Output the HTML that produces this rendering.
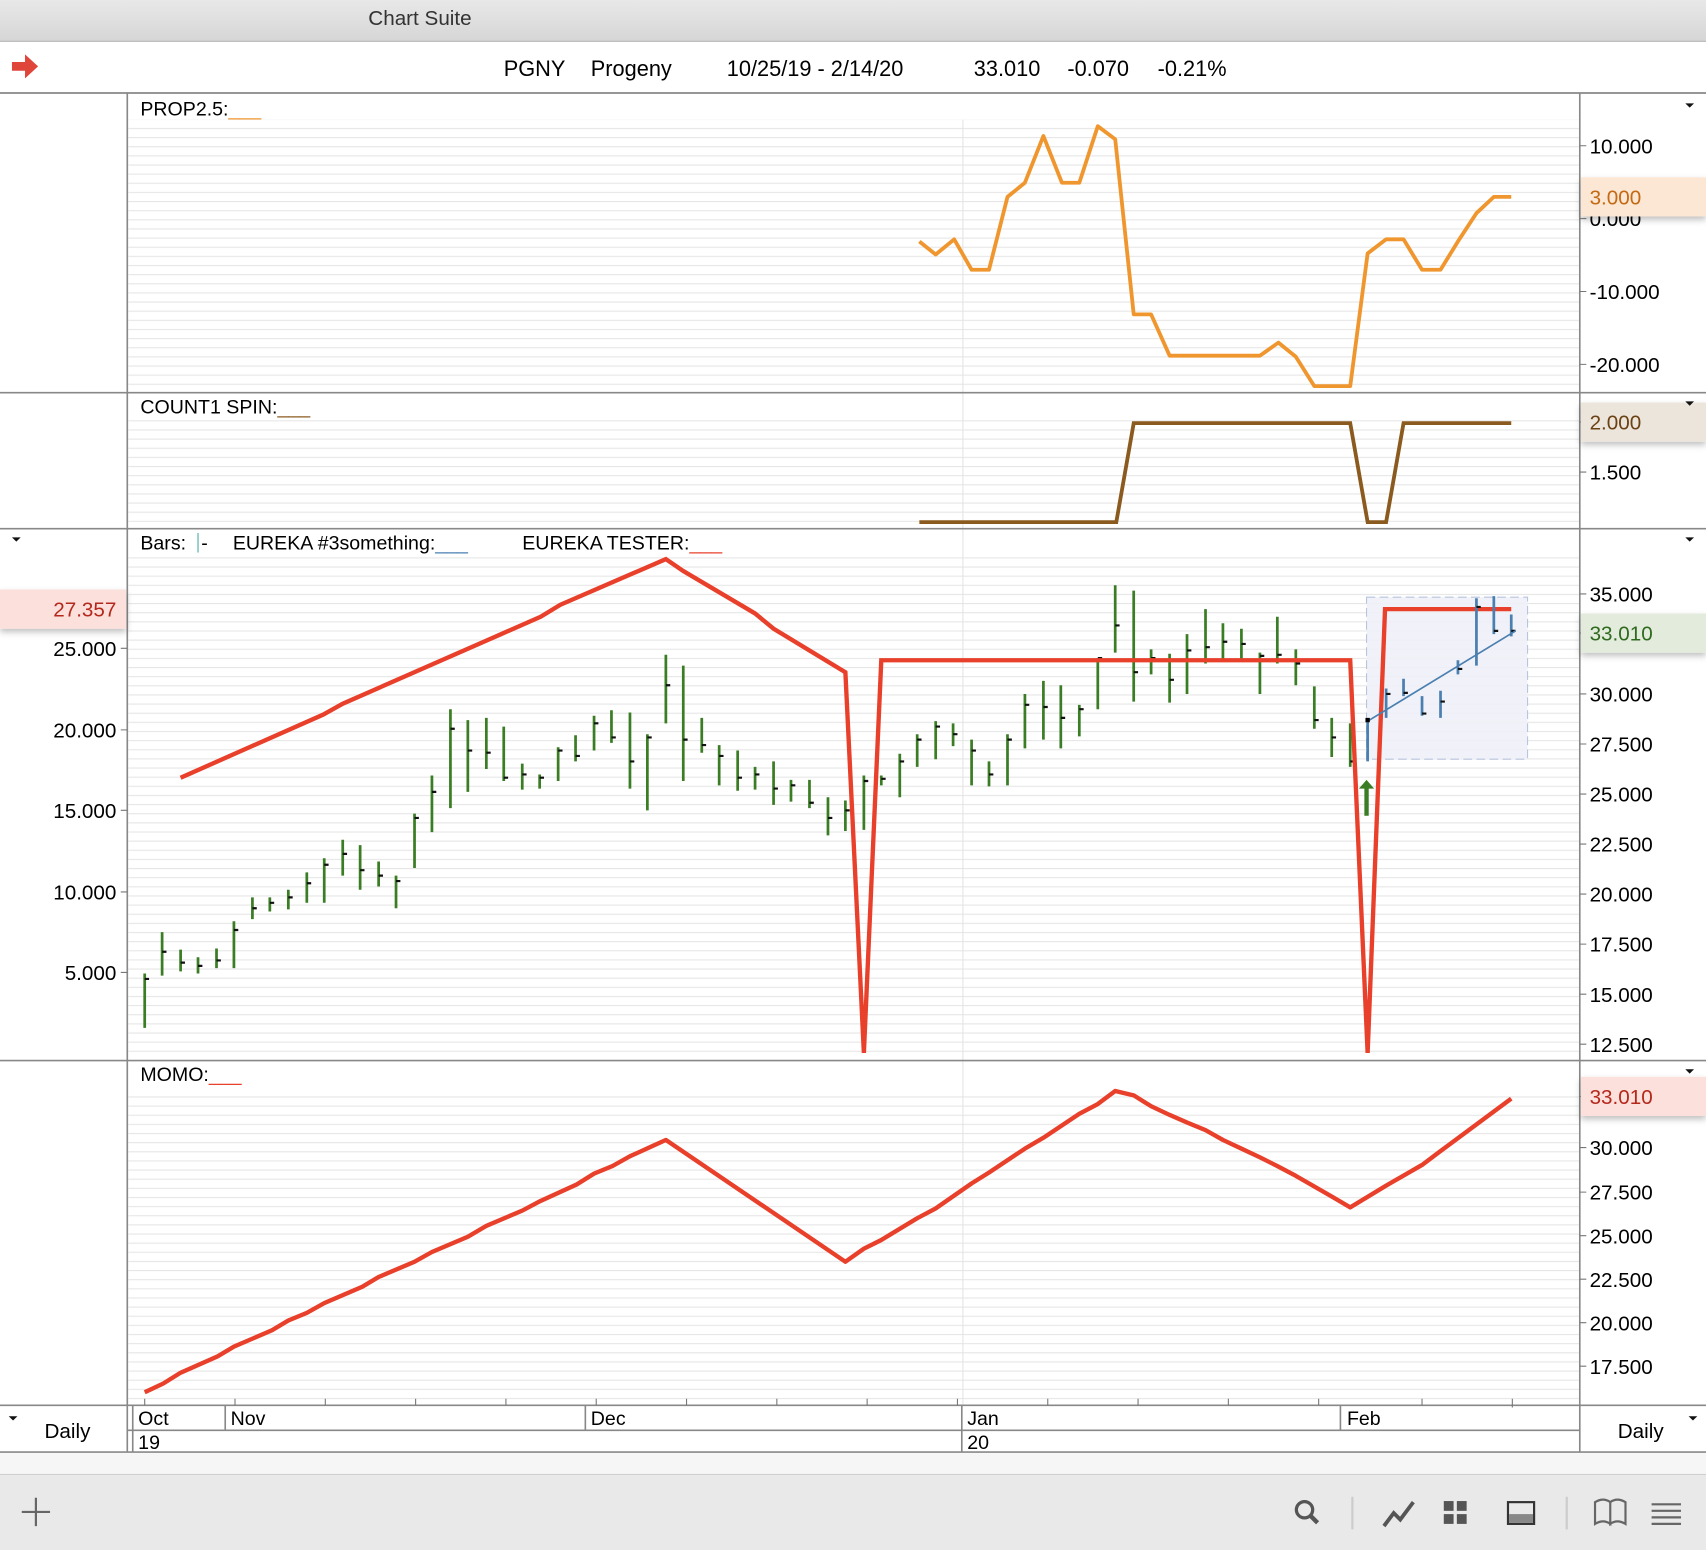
<!DOCTYPE html>
<html><head><meta charset="utf-8"><style>
html,body{margin:0;padding:0;background:#fff;overflow:hidden}
svg{display:block}
text{font-family:"Liberation Sans",Arial,sans-serif}
</style></head><body>
<svg width="1706" height="1550" viewBox="0 0 1568 1425" preserveAspectRatio="none" xmlns="http://www.w3.org/2000/svg">
<defs>
<pattern id="g" width="10" height="8.4" patternUnits="userSpaceOnUse"><rect width="10" height="8.4" fill="#fff"/><line x1="0" y1="0.5" x2="10" y2="0.5" stroke="#e6e6e6" stroke-width="1"/></pattern>
<linearGradient id="tb" x1="0" y1="0" x2="0" y2="1"><stop offset="0" stop-color="#e8e8e8"/><stop offset="1" stop-color="#d6d6d6"/></linearGradient>
<filter id="sh" x="-20%" y="-40%" width="140%" height="200%"><feDropShadow dx="0" dy="3" stdDeviation="3" flood-color="#000" flood-opacity="0.25"/></filter>
</defs>
<rect width="1568" height="1425" fill="#fff"/>
<rect x="0" y="0" width="1568" height="38" fill="url(#tb)"/>
<line x1="0" y1="38" x2="1568" y2="38" stroke="#b4b4b4"/>
<text x="386" y="23" font-size="19" text-anchor="middle" fill="#333">Chart Suite</text>
<path d="M11 57h12v-7l12 11-12 11v-7h-12z" fill="#e0453a"/>
<g font-size="20" fill="#000">
<text x="463" y="70">PGNY</text><text x="543" y="70">Progeny</text><text x="668" y="70">10/25/19 - 2/14/20</text>
<text x="895" y="70">33.010</text><text x="981" y="70">-0.070</text><text x="1064" y="70">-0.21%</text></g>
<line x1="0" y1="85.5" x2="1568" y2="85.5" stroke="#888" stroke-width="1.5"/>
<rect x="118" y="110" width="1334" height="250" fill="url(#g)"/>
<rect x="118" y="385" width="1334" height="100" fill="url(#g)"/>
<rect x="118" y="512" width="1334" height="462" fill="url(#g)"/>
<rect x="118" y="1003" width="1334" height="288" fill="url(#g)"/>
<line x1="885" y1="110" x2="885" y2="1292" stroke="#e4e4e4"/>
<g stroke="#888" stroke-width="1.5">
<line x1="0" y1="361" x2="1568" y2="361"/><line x1="0" y1="486" x2="1568" y2="486"/><line x1="0" y1="975" x2="1568" y2="975"/>
<line x1="0" y1="1292" x2="1568" y2="1292"/><line x1="117" y1="1315" x2="1452" y2="1315"/><line x1="0" y1="1335" x2="1568" y2="1335"/>
<line x1="117" y1="86" x2="117" y2="1335"/><line x1="1452" y1="86" x2="1452" y2="1335"/></g>
<g stroke="#777" stroke-width="1">
<path d="M1452 134h6M1452 201h6M1452 268h6M1452 335h6M1452 388h6M1452 434h6M1452 546h6M1452 582h6M1452 638h6M1452 684h6M1452 730h6M1452 776h6M1452 822h6M1452 868h6M1452 914h6M1452 960h6M1452 1008h6M1452 1055h6M1452 1096h6M1452 1136h6M1452 1176h6M1452 1216h6M1452 1256h6M111 596h6M111 671h6M111 745h6M111 820h6M111 894h6"/>
<path d="M133 1286v6M216 1286v6M299 1286v6M382 1286v6M465 1286v6M548 1286v6M631 1286v6M714 1286v6M797 1286v6M880 1286v6M963 1286v6M1046 1286v6M1129 1286v6M1212 1286v6M1307 1286v6M1390 1286v8"/>
</g>
<g font-size="18" fill="#000">
<text x="129" y="106">PROP2.5:<tspan fill="#f0962f">___</tspan></text>
<text x="129" y="380">COUNT1 SPIN:<tspan fill="#8b5a1f">___</tspan></text>
<text x="129" y="505">Bars:</text><line x1="182" y1="490" x2="182" y2="508" stroke="#4aa"/><text x="185" y="505">-</text>
<text x="214" y="505">EUREKA #3something:<tspan fill="#4a7fb0">___</tspan></text>
<text x="480" y="505">EUREKA TESTER:<tspan fill="#e8402b">___</tspan></text>
<text x="129" y="994">MOMO:<tspan fill="#e8402b">___</tspan></text>
</g>
<g font-size="19" fill="#000">
<text x="1461" y="141">10.000</text><text x="1461" y="208">0.000</text><text x="1461" y="275">-10.000</text><text x="1461" y="342">-20.000</text>
<text x="1461" y="441">1.500</text>
<text x="1461" y="553">35.000</text><text x="1461" y="645">30.000</text><text x="1461" y="691">27.500</text><text x="1461" y="737">25.000</text><text x="1461" y="783">22.500</text><text x="1461" y="829">20.000</text><text x="1461" y="875">17.500</text><text x="1461" y="921">15.000</text><text x="1461" y="967">12.500</text>
<text x="1461" y="1062">30.000</text><text x="1461" y="1103">27.500</text><text x="1461" y="1143">25.000</text><text x="1461" y="1183">22.500</text><text x="1461" y="1223">20.000</text><text x="1461" y="1263">17.500</text>
<g text-anchor="end"><text x="107" y="603">25.000</text><text x="107" y="678">20.000</text><text x="107" y="752">15.000</text><text x="107" y="827">10.000</text><text x="107" y="901">5.000</text></g>
</g>
<rect x="1453" y="163" width="115" height="36" fill="#fbe7d3" filter="url(#sh)"/><text x="1461" y="188" font-size="19" fill="#c46a14">3.000</text>
<rect x="1453" y="370" width="115" height="36" fill="#ece5dc" filter="url(#sh)"/><text x="1461" y="395" font-size="19" fill="#6b4214">2.000</text>
<rect x="1453" y="564" width="115" height="36" fill="#e2ebdc" filter="url(#sh)"/><text x="1461" y="589" font-size="19" fill="#2f6a1e">33.010</text>
<rect x="1453" y="990" width="115" height="36" fill="#fbe0dc" filter="url(#sh)"/><text x="1461" y="1015" font-size="19" fill="#b5281c">33.010</text>
<rect x="0" y="542" width="116" height="36" fill="#fbe0dc" filter="url(#sh)"/><text x="107" y="567" font-size="19" fill="#b5281c" text-anchor="end">27.357</text>
<g fill="#111"><path d="M1549 95h8l-4 4z"/><path d="M1549 369h8l-4 4z"/><path d="M1549 494h8l-4 4z"/><path d="M1549 983h8l-4 4z"/><path d="M11 494h8l-4 4z"/><path d="M8 1302h8l-4 4z"/><path d="M1552 1302h8l-4 4z"/></g>
<polyline fill="none" stroke="#f0962f" stroke-width="3.5" stroke-linejoin="round" points="845,222 860,234 877,220 893,248 909,248 926,181 942,168 959,125 976,168 992,168 1009,116 1025,128 1042,289 1058,289 1075,327 1158,327 1175,315 1191,328 1208,355 1241,355 1257,233 1274,220 1290,220 1307,248 1324,248 1340,222 1357,196 1373,181 1389,181"/>
<polyline fill="none" stroke="#8b5a1f" stroke-width="3.5" points="845,480 1026,480 1042,389 1241,389 1257,480 1274,480 1290,389 1389,389"/>
<rect x="1256" y="549" width="148" height="149" fill="#eef0f8" fill-opacity="0.85" stroke="#b8c4dc" stroke-dasharray="8,4"/>
<path stroke="#3a7d24" stroke-width="2.5" fill="none" d="M133 895V945M149 857V897M166 873V893M182 880V895M199 872V890M215 847V890M232 825V845M248 825V838M265 818V836M282 802V830M298 789V830M315 772V805M331 777V818M348 792V815M364 805V835M381 748V798M397 713V765M414 652V743M430 662V728M447 660V707M463 668V718M480 702V726M496 712V725M513 687V718M529 676V700M546 658V690M562 653V683M579 655V725M595 675V745M612 602V665M628 612V718M645 660V692M661 685V722M678 690V727M694 705V726M711 700V740M727 717V737M744 717V743M761 733V768M777 736V764M794 713V763M810 713V722M827 693V733M843 675V705M860 663V698M876 665V686M893 680V722M909 700V723M926 675V722M942 638V688M959 626V680M975 630V688M992 648V677M1009 605V652M1025 538V600M1042 543V645M1058 597V620M1075 601V646M1091 583V638M1108 560V610M1124 573V607M1141 578V607M1158 600V638M1174 567V610M1191 597V630M1208 631V670M1224 660V696M1241 665V705"/>
<path stroke="#111" stroke-width="2" fill="none" d="M133 900h4M149 875h4M166 885h4M182 888h4M199 883h4M215 855h4M232 835h4M248 830h4M265 825h4M282 812h4M298 795h4M315 785h4M331 800h4M348 805h4M364 810h4M381 752h4M397 728h4M414 670h4M430 690h4M447 692h4M463 715h4M480 712h4M496 715h4M513 690h4M529 695h4M546 665h4M562 678h4M579 700h4M595 678h4M612 630h4M628 680h4M645 685h4M661 695h4M678 715h4M694 712h4M711 725h4M727 722h4M744 738h4M761 752h4M777 745h4M794 718h4M810 716h4M827 700h4M843 680h4M860 668h4M876 675h4M893 690h4M909 712h4M926 680h4M942 648h4M959 650h4M975 660h4M992 652h4M1009 605h4M1025 575h4M1042 618h4M1058 605h4M1075 625h4M1091 598h4M1108 595h4M1124 590h4M1141 592h4M1158 603h4M1174 602h4M1191 610h4M1208 662h4M1224 678h4M1241 700h4"/>
<polyline fill="none" stroke="#e8402b" stroke-width="4" stroke-linejoin="miter" points="166,715 297,657 315,647 497,567 515,556 612,514 628,525 694,564 711,578 744,598 777,618 794,968 810,607 1241,607 1257,968 1273,560 1389,560"/>
<path stroke="#4a7fb0" stroke-width="2.5" fill="none" d="M1257 662V700M1274 633V660M1290 624V640M1307 640V658M1324 635V660M1340 607V620M1357 550V612M1373 548V583M1389 565V585"/>
<path stroke="#111" stroke-width="2" fill="none" d="M1274 638h4M1290 637h4M1307 656h4M1324 645h4M1340 615h4M1357 558h4M1373 580h4M1389 580h4"/>
<line x1="1257" y1="663" x2="1393" y2="580" stroke="#4a7fb0" stroke-width="1.5"/>
<rect x="1255" y="660" width="4" height="4" fill="#000"/>
<path d="M1256 717l-7 8h5v25h4v-25h5z" fill="#3a7d24"/>
<polyline fill="none" stroke="#e8402b" stroke-width="4" stroke-linejoin="round" points="133,1280 150,1272 166,1262 200,1247 215,1238 250,1223 265,1214 282,1207 298,1198 333,1183 348,1174 381,1160 397,1151 430,1137 447,1127 480,1113 497,1104 530,1089 546,1079 563,1072 579,1063 612,1048 777,1160 794,1148 810,1140 843,1120 860,1111 893,1088 909,1078 942,1056 959,1046 992,1024 1009,1015 1025,1003 1042,1007 1058,1017 1075,1025 1091,1032 1108,1039 1124,1048 1141,1056 1158,1064 1174,1072 1191,1081 1224,1100 1241,1110 1274,1090 1307,1071 1323,1059 1389,1010"/>
<g stroke="#888" stroke-width="1.5"><path d="M122 1292v43M207 1292v23M538 1292v23M884 1292v43M1232 1292v23"/></g>
<g font-size="18" fill="#000">
<text x="127" y="1310">Oct</text><text x="212" y="1310">Nov</text><text x="543" y="1310">Dec</text><text x="889" y="1310">Jan</text><text x="1238" y="1310">Feb</text>
<text x="127" y="1332">19</text><text x="889" y="1332">20</text>
<text x="62" y="1322" text-anchor="middle" font-size="19">Daily</text><text x="1508" y="1322" text-anchor="middle" font-size="19">Daily</text></g>
<rect x="0" y="1336" width="1568" height="19" fill="#f6f6f6"/>
<line x1="0" y1="1355.5" x2="1568" y2="1355.5" stroke="#cfcfcf"/>
<rect x="0" y="1356" width="1568" height="69" fill="#e9e9e9"/>
<g stroke="#555" stroke-width="2" fill="none">
<path d="M33 1377v26M20 1390h26" stroke="#666"/>
<circle cx="1199" cy="1388" r="7.5" stroke-width="3"/><path d="M1205 1394l6 6" stroke-width="4"/>
<path d="M1272 1403l9-12 6 6 12-16" stroke-width="3.5"/>
<rect x="1386" y="1381" width="24" height="20" stroke="#333"/>
<path d="M1466 1381c5-3 10-3 14 0v20c-4-3-9-3-14 0zM1480 1381c4-3 9-3 14 0v20c-5-3-10-3-14 0z" stroke="#666"/>
<path d="M1518 1383h27M1518 1389h27M1518 1395h27M1518 1401h27" stroke="#666"/>
<path d="M1243 1376v30M1440 1376v30" stroke="#ccc"/>
</g>
<g fill="#555"><rect x="1327" y="1380" width="9" height="9"/><rect x="1339" y="1380" width="9" height="9"/><rect x="1327" y="1392" width="9" height="9"/><rect x="1339" y="1392" width="9" height="9"/></g>
<rect x="1387" y="1392" width="22" height="8" fill="#888"/>
</svg>
</body></html>
